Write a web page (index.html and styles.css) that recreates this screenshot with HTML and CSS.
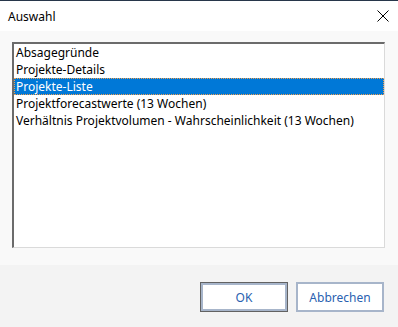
FILE: index.html
```html
<!DOCTYPE html>
<html lang="de">
<head>
    <meta charset="UTF-8">
    <title>Auswahl</title>
    <link rel="stylesheet" href="styles.css">
</head>
<body>
    <div class="window">
        <div class="titlebar">
            <span class="title">Auswahl</span>
            <span class="close">
                <svg width="12" height="12" viewBox="0 0 12 12">
                    <path d="M0.5 0.5 L11.5 11.5 M11.5 0.5 L0.5 11.5" stroke="#000" stroke-width="1" fill="none"/>
                </svg>
            </span>
        </div>
        <div class="content">
            <div class="listbox">
                <div class="item">Absagegründe</div>
                <div class="item">Projekte-Details</div>
                <div class="item selected">Projekte-Liste</div>
                <div class="item">Projektforecastwerte (13 Wochen)</div>
                <div class="item">Verhältnis Projektvolumen - Wahrscheinlichkeit (13 Wochen)</div>
            </div>
        </div>
        <div class="footer">
            <button class="btn default">OK</button>
            <button class="btn">Abbrechen</button>
        </div>
    </div>
</body>
</html>
```

FILE: styles.css
```css
* {
    margin: 0;
    padding: 0;
    box-sizing: border-box;
}

body {
    font-family: "Noto Sans", "Open Sans", sans-serif;
    font-size: 12px;
    color: #000;
    background-color: #f3f3f3;
}

.window {
    width: 398px;
    height: 327px;
    display: flex;
    flex-direction: column;
    border-top: 1px solid #27364a;
}

.titlebar {
    height: 30px;
    background-color: #fff;
    display: flex;
    align-items: center;
    justify-content: space-between;
    padding: 0 9px 0 8px;
}

.title {
    font-size: 12px;
}

.close {
    display: flex;
    margin-top: -1px;
}

.content {
    height: 234px;
    background-color: #f9f9f9;
    padding: 11px 13px 0 12px;
}

.listbox {
    height: 206px;
    background-color: #fff;
    border-top: 2px solid #6b6b6b;
    border-left: 2px solid #6b6b6b;
    border-right: 1px solid #dadada;
    border-bottom: 1px solid #dadada;
    padding-top: 0;
}

.item {
    height: 17px;
    line-height: 17px;
    padding-left: 2px;
    white-space: nowrap;
}

.item.selected {
    background-color: #0078d7;
    color: #fff;
    outline: 1px dotted #f0a050;
    outline-offset: -1px;
}

.footer {
    flex: 1;
    background-color: #f3f3f3;
    display: flex;
    justify-content: flex-end;
    align-items: flex-start;
    gap: 8px;
    padding: 17px 14px 0 0;
}

.btn {
    width: 88px;
    height: 30px;
    background-color: #fff;
    border: 2px solid #a7b5ca;
    font-family: "Noto Sans", "Open Sans", sans-serif;
    font-size: 12px;
    color: #2a5fb0;
}

.btn.default {
    border: 1px solid #626262;
    box-shadow: inset 0 0 0 2px #a7b5ca;
}
```
